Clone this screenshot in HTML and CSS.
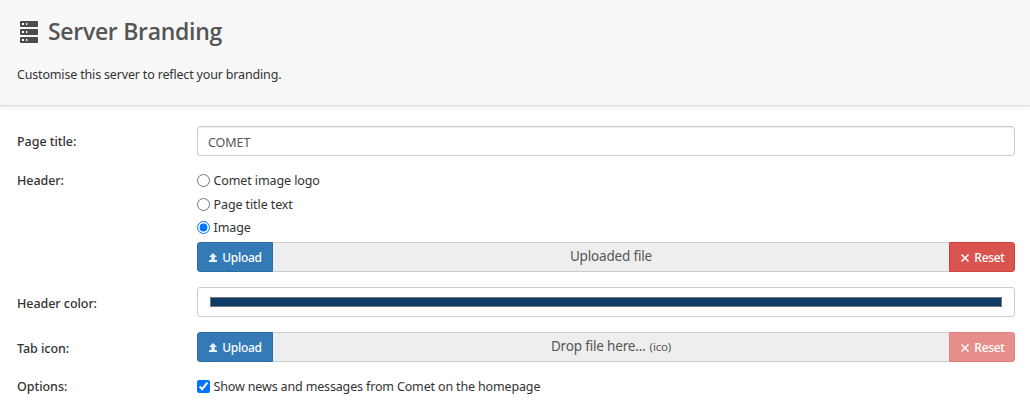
FILE: index.html
```html
<!DOCTYPE html>
<html lang="en">
<head>
<meta charset="utf-8">
<title>Server Branding</title>
<link rel="stylesheet" href="styles.css">
</head>
<body>
<header class="page-header">
  <h1 class="page-heading">
    <svg class="server-icon" width="18" height="22" viewBox="0 0 18 22" aria-hidden="true">
      <g fill="#4c4c4c"><rect width="18" height="6" rx=".8"/><rect y="8" width="18" height="6" rx=".8"/><rect y="16" width="18" height="6" rx=".8"/></g>
      <path fill="#fff" d="M2 2h2v2H2zM6 2h1.300v2H6zM2 10h2v2H2zM6 10h1.300v2H6zM2 18h2v2H2zM6 18h1.300v2H6z"/>
    </svg>
    <span class="heading-text">Server Branding</span>
  </h1>
  <p class="intro"><span class="intro-text">Customise this server to reflect your branding.</span></p>
</header>
<form class="settings">
  <div class="row row-title">
    <label class="name" for="title">Page title:</label>
    <input class="box text-input" id="title" type="text" value="COMET">
  </div>
  <div class="row row-header">
    <span class="name">Header:</span>
    <div class="choices">
      <label class="choice"><input class="mark" type="radio" name="header"><span>Comet image logo</span></label>
      <label class="choice"><input class="mark" type="radio" name="header"><span>Page title text</span></label>
      <label class="choice"><input class="mark" type="radio" name="header" checked><span>Image</span></label>
    </div>
  </div>
  <div class="row row-image">
    <div class="file-group">
      <button class="btn upload" type="button"><svg class="icon" width="10" height="10" viewBox="0 0 10 10" aria-hidden="true"><path fill="currentColor" d="M5 0l4 4H6.700v3H9v2H1V7h2.300V4H1z"/></svg><span>Upload</span></button>
      <span class="drop">Uploaded file</span>
      <button class="btn reset" type="button"><svg class="icon" width="10" height="10" viewBox="0 0 10 10" aria-hidden="true"><path stroke="currentColor" stroke-width="1.700" d="M1.500 1.500l7 7M8.500 1.500l-7 7"/></svg><span>Reset</span></button>
    </div>
  </div>
  <div class="row row-color">
    <span class="name">Header color:</span>
    <div class="box color-input"><div class="swatch"></div></div>
  </div>
  <div class="row row-tab">
    <span class="name">Tab icon:</span>
    <div class="file-group">
      <button class="btn upload" type="button"><svg class="icon" width="10" height="10" viewBox="0 0 10 10" aria-hidden="true"><path fill="currentColor" d="M5 0l4 4H6.700v3H9v2H1V7h2.300V4H1z"/></svg><span>Upload</span></button>
      <span class="drop"><span class="drop-hint">Drop file here...</span><small class="ext">(ico)</small></span>
      <button class="btn reset disabled" type="button"><svg class="icon" width="10" height="10" viewBox="0 0 10 10" aria-hidden="true"><path stroke="currentColor" stroke-width="1.700" d="M1.500 1.500l7 7M8.500 1.500l-7 7"/></svg><span>Reset</span></button>
    </div>
  </div>
  <div class="row row-options">
    <span class="name">Options:</span>
    <label class="choice"><input class="mark" type="checkbox" checked><span class="option-text">Show news and messages from Comet on the homepage</span></label>
  </div>
</form>
</body>
</html>
```

FILE: styles.css
```css
* { box-sizing: border-box; }
body {
  margin: 0;
  height: 420px;
  overflow: hidden;
  background: #fff;
  color: #333;
  font: 12.5px/18px "Noto Sans", "Open Sans", sans-serif;
  letter-spacing: -0.17px;
}
.page-header {
  height: 106px;
  padding: 17px 17px 0;
  background: #f8f8f8;
  border-bottom: 1px solid #ddd;
  box-shadow: 0 1px 4px rgba(0, 0, 0, .09);
}
.page-heading {
  display: flex;
  align-items: center;
  gap: 10px;
  height: 30px;
  margin: 0;
  padding-left: 3px;
  color: #555;
  font-size: 23px;
  font-weight: 600;
  font-family: "Open Sans", sans-serif;
  letter-spacing: -0.3px;
  white-space: nowrap;
}
.heading-text { padding-bottom: 2px; }
.intro { margin: 19px 0 0; }
.settings { padding: 20px 15px 0 17px; }
.row { display: grid; grid-template-columns: 180px 1fr; height: 30px; align-items: center; }
.name { font-weight: 500; white-space: nowrap; letter-spacing: -0.05px; }
.row-title .name { padding-top: 2px; }
.row-color .name, .row-tab .name { padding-top: 3px; }
.box { width: 100%; height: 30px; border: 1px solid #ccc; border-radius: 3px; background: #fff; }
.text-input {
  padding: 2px 10px 0;
  color: #555;
  font: inherit;
  letter-spacing: -0.05px;
  box-shadow: inset 0 1px 1px rgba(0, 0, 0, .075);
}
.row-header { height: 68px; margin-top: 16px; align-items: start; }
.choices { display: grid; grid-template-rows: 24px 23px 18px; letter-spacing: -0.1px; }
.choice { display: flex; align-items: center; height: 18px; gap: 3.5px; white-space: nowrap; }
.mark { width: 13px; height: 13px; margin: 0; flex: none; accent-color: #0075ff; }
.choices .mark { margin-bottom: 1px; }
.row-image { margin-top: 2px; }
.row-image .file-group { grid-column: 2; }
.file-group { display: flex; height: 30px; }
.btn {
  display: flex;
  align-items: center;
  justify-content: center;
  gap: 4px;
  padding: 1px 0 0;
  color: #fff;
  font: 500 12px/18px "Noto Sans", sans-serif;
  letter-spacing: -0.3px;
}
.icon { flex: none; opacity: .9; }
.upload { width: 76px; background: #337ab7; border: 1px solid #2e6da4; border-radius: 3px 0 0 3px; }
.reset { width: 66px; padding-left: 1px; background: #d9534f; border: 1px solid #d43f3a; border-radius: 0 3px 3px 0; }
.disabled { opacity: .65; }
.drop {
  flex: 1;
  display: flex;
  align-items: center;
  justify-content: center;
  gap: 4px;
  padding-bottom: 2px;
  border: solid #ccc;
  border-width: 1px 0;
  background: #eee;
  color: #555;
  font-size: 13.5px;
}
.ext { font-size: 11.5px; padding-top: 1px; }
.row-color, .row-tab { margin-top: 15px; }
.color-input { padding: 9px 12px; }
.swatch { height: 10px; border: 1px solid #777; background: #0f3c66; }
.row-options { height: 18px; margin-top: 16px; letter-spacing: -0.15px; }
.row-options .mark { margin-bottom: 2px; }
```
